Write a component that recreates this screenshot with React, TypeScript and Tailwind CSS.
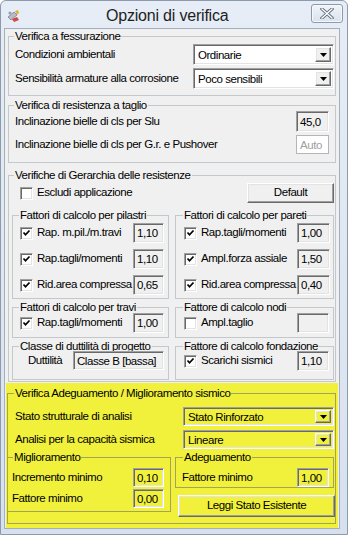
import React from "react";

// classic 3D edges
const sunken =
  "border border-t-[#a0a0a0] border-l-[#a0a0a0] border-r-white border-b-white shadow-[inset_1px_1px_0_#696969,inset_-1px_-1px_0_#e3e3e3]";
const raised =
  "border border-t-white border-l-white border-r-[#696969] border-b-[#696969] shadow-[inset_-1px_-1px_0_#a0a0a0,inset_1px_1px_0_#e3e3e3]";

type GroupProps = {
  title: string;
  className?: string;
  legendClass?: string;
  children: React.ReactNode;
};

const Group = ({ title, className = "", legendClass = "", children }: GroupProps) => (
  <fieldset className={`border ${className}`}>
    <legend className={`px-[1px] leading-[14px] ${legendClass}`}>{title}</legend>
    {children}
  </fieldset>
);

const TextBox = ({
  value,
  className = "",
  muted = false,
}: {
  value: string;
  className?: string;
  muted?: boolean;
}) => (
  <div
    className={`flex items-center pl-[3px] leading-[14px] whitespace-nowrap ${
      muted ? "border border-[#b5b5b5] text-[#a0a0a0] bg-white" : sunken
    } ${className}`}
  >
    {value}
  </div>
);

const Check = ({ checked }: { checked: boolean }) => (
  <div className={`w-[13px] h-[13px] shrink-0 bg-white flex items-center justify-center ${sunken}`}>
    {checked && (
      <svg width="9" height="9" viewBox="0 0 9 9">
        <path d="M1.5 3.5 L3.5 5.8 L7.5 1.5" fill="none" stroke="#000" strokeWidth="1.7" />
      </svg>
    )}
  </div>
);

const Combo = ({ value, className = "", bg = "bg-white", btnBg = "bg-[#f0f0f0]" }: { value: string; className?: string; bg?: string; btnBg?: string }) => (
  <div className={`flex items-stretch p-[2px] ${sunken} ${bg} ${className}`}>
    <div className="flex-1 flex items-center pl-[2px] leading-[14px] whitespace-nowrap">{value}</div>
    <div className={`w-[16px] flex items-center justify-center ${raised} ${btnBg}`}>
      <svg width="7" height="4" viewBox="0 0 7 4">
        <polygon points="0,0 7,0 3.5,4" fill="#000" />
      </svg>
    </div>
  </div>
);

const CheckRow = ({
  label,
  value,
  checked = true,
  boxClass,
}: {
  label: string;
  value: string;
  checked?: boolean;
  boxClass: string;
}) => (
  <div className="flex items-center">
    <Check checked={checked} />
    <span className="ml-[4px] flex-1 whitespace-nowrap">{label}</span>
    <TextBox value={value} className={boxClass} />
  </div>
);

const AppIcon = () => (
  <svg width="16" height="16" viewBox="0 0 16 16">
    <path d="M2 9 L8 4 L11 7 L5 12 Z" fill="#b9bcc4" stroke="#7c8089" strokeWidth="0.8" />
    <path d="M9 3 L12 2 L13 5 L11 7 Z" fill="#e2b23a" />
    <path d="M6 11 L11 9 L13 12 L8 14 Z" fill="#d04848" />
    <circle cx="4" cy="5" r="1.6" fill="#8fa2c4" />
  </svg>
);

const CloseBtn = () => (
  <div className="w-[32px] h-[19px] rounded-[3px] border border-[#8c9aae] bg-gradient-to-b from-[#f2f5f9] to-[#d9e2ec] flex items-center justify-center shadow-[inset_0_0_0_1px_#f6f8fb]">
    <svg width="14" height="11" viewBox="0 0 14 11">
      <path d="M2 1 L12 10 M12 1 L2 10" stroke="#5f6c7c" strokeWidth="3.2" strokeLinecap="square" />
      <path d="M2 1 L12 10 M12 1 L2 10" stroke="#ffffff" strokeWidth="1.4" strokeLinecap="square" />
    </svg>
  </div>
);

const App = () => {
  return (
    <div className="w-[348px] h-[535px] overflow-hidden bg-gradient-to-b from-[#e6edf6] to-[#d7e1ed] border border-[#8d9aab] rounded-t-[6px] text-[11.5px] tracking-[-0.45px] text-black [font-family:'Liberation_Sans',Arial,sans-serif]">
      {/* title bar */}
      <div className="h-[27px] flex items-center">
        <div className="ml-[5px] mt-[2px]">
          <AppIcon />
        </div>
        <div className="ml-[84px] text-[16px] tracking-[-0.2px] leading-[20px] text-[#1e1e1e] mt-[3px]">Opzioni di verifica</div>
        <div className="flex-1" />
        <div className="mr-[4px] -mt-[3px]">
          <CloseBtn />
        </div>
      </div>

      {/* client area */}
      <div className="ml-[3px] w-[336px] border border-[#a3afbd] bg-[#f0f0f0]">
        {/* Verifica a fessurazione */}
        <Group title="Verifica a fessurazione" className="mx-[3px] border-[#c3c8cd]" legendClass="ml-[5px]">
          <div className="pl-[6px] pr-[1px] pt-[1px] pb-[6px] flex flex-col gap-[3px]">
            <div className="flex items-center justify-between">
              <span>Condizioni ambientali</span>
              <Combo value="Ordinarie" className="w-[141px] h-[21px]" />
            </div>
            <div className="flex items-center justify-between">
              <span>Sensibilità armature alla corrosione</span>
              <Combo value="Poco sensibili" className="w-[141px] h-[21px]" />
            </div>
          </div>
        </Group>

        {/* Verifica di resistenza a taglio */}
        <Group title="Verifica di resistenza a taglio" className="mx-[3px] mt-[2px] border-[#c3c8cd]" legendClass="ml-[5px]">
          <div className="pl-[6px] pr-[6px] -mt-[1px] pb-[8px] flex flex-col gap-[3px]">
            <div className="flex items-center justify-between">
              <span>Inclinazione bielle di cls per Slu</span>
              <TextBox value="45,0" className="w-[33px] h-[21px]" />
            </div>
            <div className="flex items-center justify-between">
              <span>Inclinazione bielle di cls per G.r. e Pushover</span>
              <TextBox value="Auto" muted className="w-[33px] h-[19px]" />
            </div>
          </div>
        </Group>

        {/* Gerarchia delle resistenze */}
        <Group title="Verifiche di Gerarchia delle resistenze" className="mx-[3px] mt-[5px] border-[#c3c8cd]" legendClass="ml-[5px]">
          <div className="flex items-center pl-[11px] pr-[1px] pt-[1px]">
            <Check checked={false} />
            <span className="ml-[4px] flex-1">Escludi applicazione</span>
            <div className={`w-[87px] h-[20px] flex items-center justify-center bg-[#f0f0f0] ${raised}`}>Default</div>
          </div>

          <div className="grid grid-cols-[157px_159px] gap-x-[6px] gap-y-[1px] pl-[3px] mt-[5px] pb-[1px]">
            <Group title="Fattori di calcolo per pilastri" className="border-[#c3c8cd]" legendClass="ml-[6px]">
              <div className="pl-[7px] pr-[4px] pt-[1px] pb-[3px] flex flex-col gap-[6px]">
                <CheckRow label="Rap. m.pil./m.travi" value="1,10" boxClass="w-[31px] h-[20px]" />
                <CheckRow label="Rap.tagli/momenti" value="1,10" boxClass="w-[31px] h-[20px]" />
                <CheckRow label="Rid.area compressa" value="0,65" boxClass="w-[31px] h-[20px]" />
              </div>
            </Group>
            <Group title="Fattori di calcolo per pareti" className="border-[#c3c8cd]" legendClass="ml-[7px]">
              <div className="pl-[8px] pr-[3px] pt-[1px] pb-[3px] flex flex-col gap-[6px]">
                <CheckRow label="Rap.tagli/momenti" value="1,00" boxClass="w-[33px] h-[20px]" />
                <CheckRow label="Ampl.forza assiale" value="1,50" boxClass="w-[33px] h-[20px]" />
                <CheckRow label="Rid.area compressa" value="0,40" boxClass="w-[33px] h-[20px]" />
              </div>
            </Group>

            <Group title="Fattori di calcolo per travi" className="border-[#c3c8cd]" legendClass="ml-[6px]">
              <div className="pl-[7px] pr-[4px] -mt-[1px] pb-[4px]">
                <CheckRow label="Rap.tagli/momenti" value="1,00" boxClass="w-[31px] h-[20px]" />
              </div>
            </Group>
            <Group title="Fattore di calcolo nodi" className="border-[#c3c8cd]" legendClass="ml-[7px]">
              <div className="pl-[8px] pr-[4px] -mt-[1px] pb-[4px]">
                <CheckRow label="Ampl.taglio" value="" checked={false} boxClass="w-[32px] h-[20px]" />
              </div>
            </Group>

            <Group title="Classe di duttilità di progetto" className="border-[#c3c8cd]" legendClass="ml-[6px]">
              <div className="flex items-center pl-[15px] pr-[4px] -mt-[2px] pb-[9px]">
                <span className="flex-1">Duttilità</span>
                <TextBox value="Classe B [bassa]" className="w-[91px] h-[19px] bg-[#f0f0f0]" />
              </div>
            </Group>
            <Group title="Fattore di calcolo fondazione" className="border-[#c3c8cd]" legendClass="ml-[7px]">
              <div className="pl-[8px] pr-[4px] -mt-[2px] pb-[7px]">
                <CheckRow label="Scarichi sismici" value="1,10" boxClass="w-[32px] h-[20px]" />
              </div>
            </Group>
          </div>
        </Group>

        {/* Adeguamento / Miglioramento - highlighted */}
        <div className="mx-[1px] mt-[1px] bg-[#f1f13c] pt-[3px] pb-[4px]">
          <Group
            title="Verifica Adeguamento / Miglioramento sismico"
            className="ml-[1px] mr-[2px] border-[#a4a458]"
            legendClass="ml-[6px]"
          >
            <div className="pl-[7px] pr-[1px] pt-[7px] flex flex-col gap-[4px]">
              <div className="flex items-center justify-between">
                <span>Stato strutturale di analisi</span>
                <Combo value="Stato Rinforzato" className="w-[151px] h-[19px]" bg="bg-[#f1f13c]" btnBg="bg-[#f1f13c]" />
              </div>
              <div className="flex items-center justify-between">
                <span>Analisi per la capacità sismica</span>
                <Combo value="Lineare" className="w-[151px] h-[19px]" bg="bg-[#f1f13c]" btnBg="bg-[#f1f13c]" />
              </div>
            </div>

            <div className="grid grid-cols-[164px_159px] gap-x-[4px] -ml-[1px] mt-[1px] pb-[6px] items-start">
              <Group title="Miglioramento" className="border-[#a4a458]" legendClass="ml-[5px]">
                <div className="pl-[4px] pr-[6px] pt-[4px] pb-[3px] flex flex-col gap-[2px]">
                  <div className="flex items-center justify-between">
                    <span>Incremento minimo</span>
                    <TextBox value="0,10" className="w-[31px] h-[19px] bg-[#f1f13c]" />
                  </div>
                  <div className="flex items-center justify-between">
                    <span>Fattore minimo</span>
                    <TextBox value="0,00" className="w-[31px] h-[19px] bg-[#f1f13c]" />
                  </div>
                </div>
              </Group>
              <div className="flex flex-col">
                <Group title="Adeguamento" className="border-[#a4a458]" legendClass="ml-[7px]">
                  <div className="flex items-center justify-between pl-[6px] pr-[4px] pt-[4px]">
                    <span>Fattore minimo</span>
                    <TextBox value="1,00" className="w-[32px] h-[19px] bg-[#f1f13c]" />
                  </div>
                </Group>
                <div className={`ml-[3px] mt-[7px] w-[157px] h-[22px] flex items-center justify-center bg-[#f1f13c] ${raised}`}>
                  Leggi Stato Esistente
                </div>
              </div>
            </div>
          </Group>
        </div>
      </div>
    </div>
  );
};

export default App;
